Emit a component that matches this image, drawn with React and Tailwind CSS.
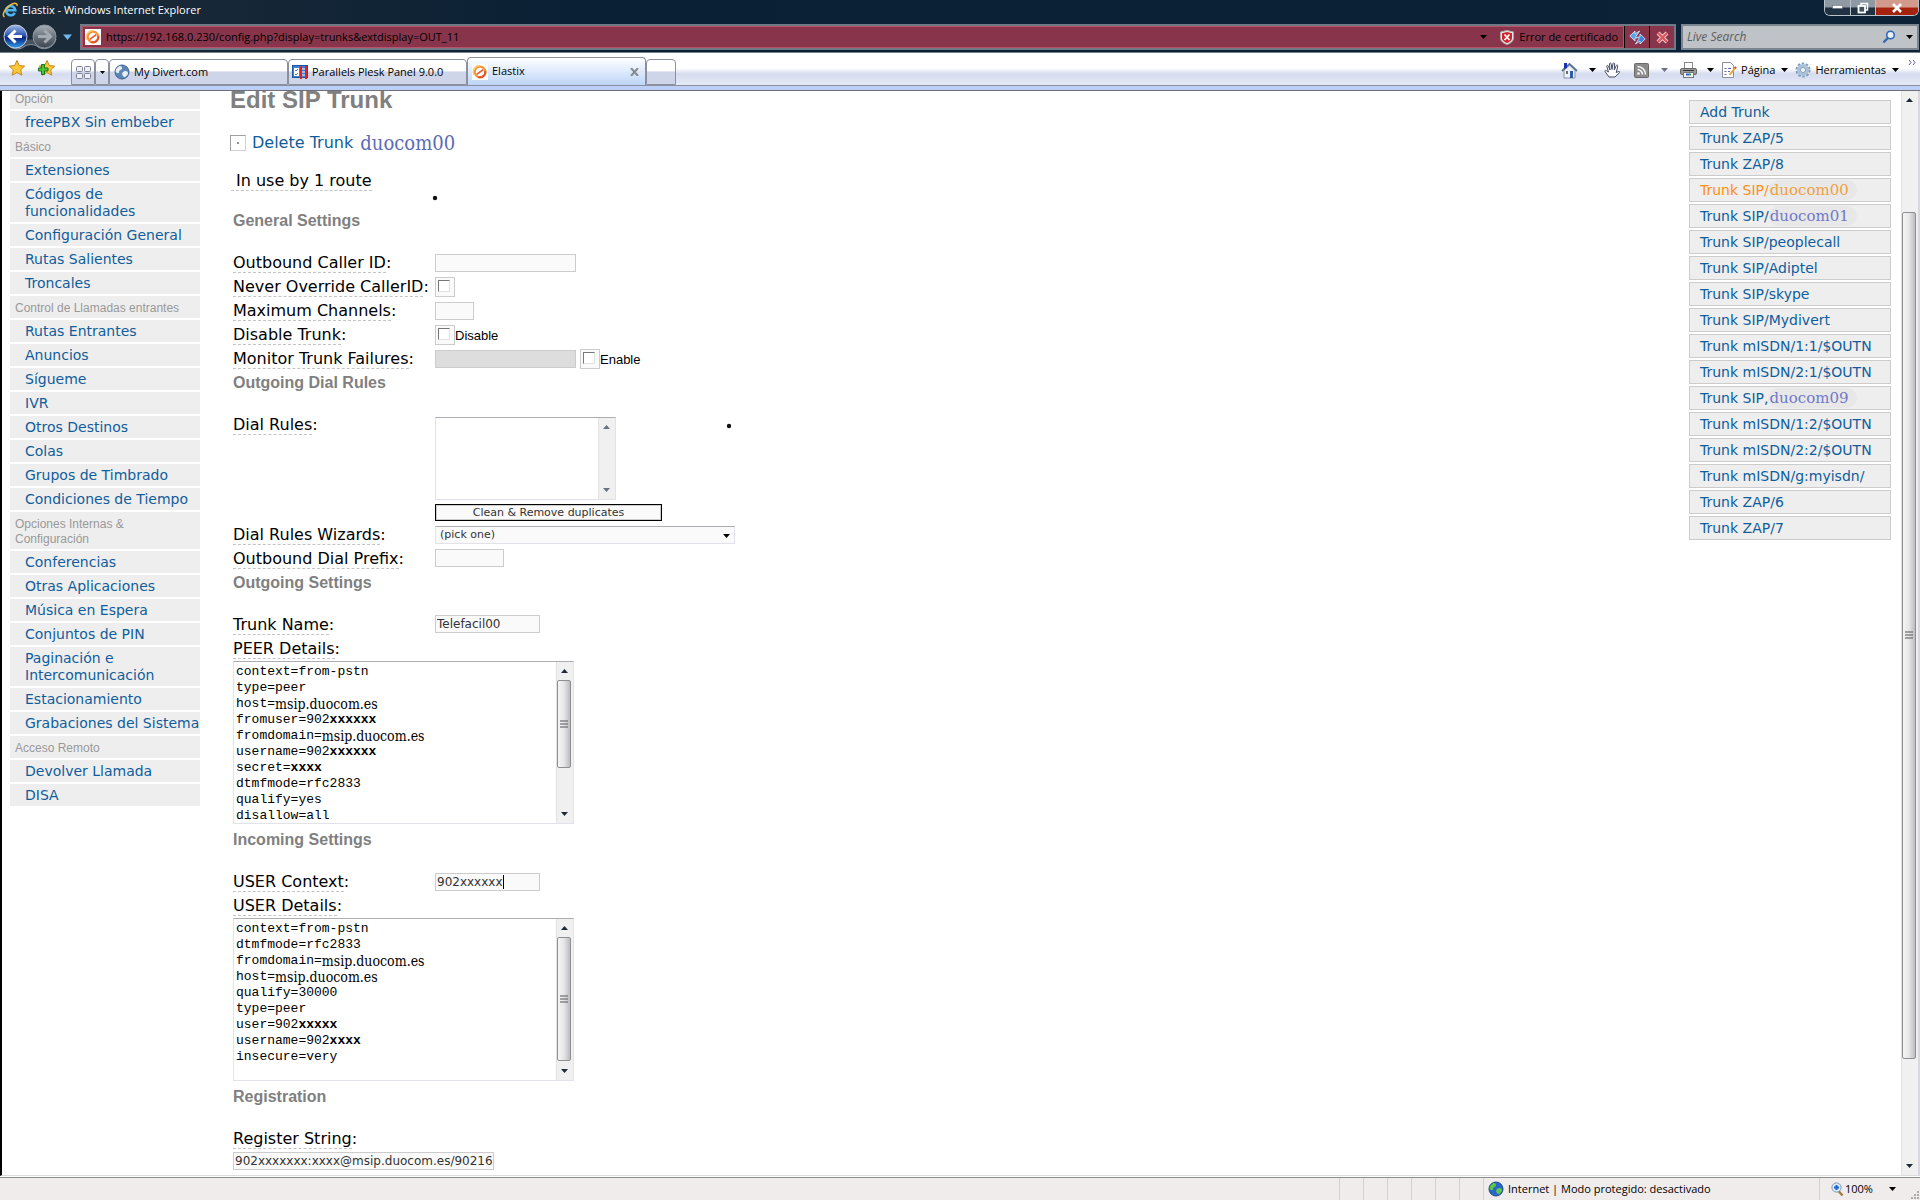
import React, { useState } from "react";

// Left menu: a title opens a group, the items below it are links
const menu = [
  { title: "Opción", items: ["freePBX Sin embeber"] },
  {
    title: "Básico",
    items: [
      "Extensiones",
      "Códigos de funcionalidades",
      "Configuración General",
      "Rutas Salientes",
      "Troncales",
    ],
  },
  {
    title: "Control de Llamadas entrantes",
    items: [
      "Rutas Entrantes",
      "Anuncios",
      "Sígueme",
      "IVR",
      "Otros Destinos",
      "Colas",
      "Grupos de Timbrado",
      "Condiciones de Tiempo",
    ],
  },
  {
    title: "Opciones Internas & Configuración",
    items: [
      "Conferencias",
      "Otras Aplicaciones",
      "Música en Espera",
      "Conjuntos de PIN",
      "Paginación e Intercomunicación",
      "Estacionamiento",
      "Grabaciones del Sistema",
    ],
  },
  { title: "Acceso Remoto", items: ["Devolver Llamada", "DISA"] },
];

const trunks = [
  { label: "Add Trunk" },
  { label: "Trunk ZAP/5" },
  { label: "Trunk ZAP/8" },
  { label: "Trunk SIP/", alias: "duocom00", current: true },
  { label: "Trunk SIP/", alias: "duocom01" },
  { label: "Trunk SIP/peoplecall" },
  { label: "Trunk SIP/Adiptel" },
  { label: "Trunk SIP/skype" },
  { label: "Trunk SIP/Mydivert" },
  { label: "Trunk mISDN/1:1/$OUTN" },
  { label: "Trunk mISDN/2:1/$OUTN" },
  { label: "Trunk SIP,", alias: "duocom09" },
  { label: "Trunk mISDN/1:2/$OUTN" },
  { label: "Trunk mISDN/2:2/$OUTN" },
  { label: "Trunk mISDN/g:myisdn/" },
  { label: "Trunk ZAP/6" },
  { label: "Trunk ZAP/7" },
];

// [plain text, replaced value, kind of value]
const peerLines = [
  ["context=from-pstn"],
  ["type=peer"],
  ["host=", "msip.duocom.es", "host"],
  ["fromuser=902", "xxxxxx", "mask"],
  ["fromdomain=", "msip.duocom.es", "host"],
  ["username=902", "xxxxxx", "mask"],
  ["secret=", "xxxx", "mask"],
  ["dtmfmode=rfc2833"],
  ["qualify=yes"],
  ["disallow=all"],
];

const userLines = [
  ["context=from-pstn"],
  ["dtmfmode=rfc2833"],
  ["fromdomain=", "msip.duocom.es", "host"],
  ["host=", "msip.duocom.es", "host"],
  ["qualify=30000"],
  ["type=peer"],
  ["user=902", "xxxxx", "mask"],
  ["username=902", "xxxx", "mask"],
  ["insecure=very"],
];

const boxClass =
  "border border-[#cccccc] bg-[#fafafa] px-px text-xs text-[#333333] outline-none";

// ------------------ Small drawings ------------------

const Down = ({ className = "text-black" }) => (
  <svg width="7" height="4" viewBox="0 0 7 4" className={`shrink-0 ${className}`}>
    <path d="M0 0h7L3.5 4z" fill="currentColor" />
  </svg>
);

const Up = ({ className = "text-black" }) => (
  <svg width="7" height="4" viewBox="0 0 7 4" className={`shrink-0 ${className}`}>
    <path d="M0 4h7L3.5 0z" fill="currentColor" />
  </svg>
);

const IeLogo = () => (
  <svg width="17" height="17" viewBox="0 0 17 17">
    <path
      d="M12.8 10.8A4.6 4.6 0 1 1 13.3 8.2H5"
      fill="none"
      stroke="#4fb4f2"
      strokeWidth="2.6"
    />
    <path
      d="M2.6 14.8C-.5 14 2.4 6.8 8 3.2c4.4-2.8 7.7-2.3 7 .8"
      fill="none"
      stroke="#f3bb35"
      strokeWidth="1.5"
    />
  </svg>
);

const ElastixLogo = () => (
  <svg width="16" height="16" viewBox="0 0 16 16" className="shrink-0">
    <rect width="16" height="16" fill="#fff" />
    <circle cx="8" cy="8" r="5.3" fill="none" stroke="#f3923a" strokeWidth="2.2" />
    <path d="M2 11A6.500 6.500 0 0 1 8 1.500" fill="none" stroke="#fbcf7a" strokeWidth="1.500" />
    <path d="M4.800 10.400l6.400-4.800" stroke="#ea5a30" strokeWidth="1.800" />
    <path d="M13.300 7a5.300 5.300 0 0 1-7 6" fill="none" stroke="#e8502c" strokeWidth="2" />
  </svg>
);

const NavButtons = () => (
  <svg width="56" height="26" viewBox="0 0 56 26" className="shrink-0">
    <defs>
      <linearGradient id="back" x1="0" y1="0" x2="0" y2="1">
        <stop offset="0" stopColor="#9db7e6" />
        <stop offset="0.45" stopColor="#2d57b4" />
        <stop offset="0.55" stopColor="#0a2280" />
        <stop offset="1" stopColor="#2fa0f0" />
      </linearGradient>
      <linearGradient id="forward" x1="0" y1="0" x2="0" y2="1">
        <stop offset="0" stopColor="#a9b0b8" />
        <stop offset="0.5" stopColor="#6a737d" />
        <stop offset="1" stopColor="#3c4650" />
      </linearGradient>
    </defs>
    <path d="M3 16c3 10 15 11 20 6 4-2 10-2 13 1 6 4 16 1 18-8" fill="#46525e" stroke="#8b949e" />
    <circle cx="13.5" cy="12.5" r="11.5" fill="url(#back)" stroke="#c6d2e4" />
    <circle cx="42.5" cy="12.5" r="11.5" fill="url(#forward)" stroke="#8d969f" />
    <path d="M20 12.5H8M13.5 6.5l-6 6 6 6" fill="none" stroke="#fff" strokeWidth="3" />
    <path d="M36 12.5h12M42.5 6.5l6 6-6 6" fill="none" stroke="#a4abb2" strokeWidth="3" />
  </svg>
);

const Star = ({ plus }) => (
  <svg width="18" height="18" viewBox="0 0 18 18">
    <path
      d="M9 1.5l2.3 5 5.4.6-4 3.7 1.1 5.4L9 13.5l-4.8 2.700 1.100-5.400-4-3.700 5.400-.6z"
      fill="#fcc838"
      stroke="#c98516"
    />
    {plus && (
      <path
        d="M3.500 5.500h3v3.500h3.500v3H6.500v3.500h-3V12H.5V9h3z"
        fill="#4fc23c"
        stroke="#197519"
      />
    )}
  </svg>
);

const Globe = ({ green }) => (
  <svg width="16" height="16" viewBox="0 0 16 16" className="shrink-0">
    <circle cx="8" cy="8" r="7" fill={green ? "#2a66c8" : "#5d86b5"} />
    <path
      d="M3 3c3-2 5-1 5 1S5 6 5 8s-2 1-3.500 0S2 4 3 3zM9 8c2-2 5-1 5 1s-3 5-4 4-3-3-1-5z"
      fill={green ? "#5cc94a" : "#e6eef6"}
    />
    <circle cx="8" cy="8" r="7" fill="none" stroke={green ? "#1b4a86" : "#3f638f"} />
  </svg>
);

const PleskIcon = () => (
  <svg width="16" height="14" viewBox="0 0 16 14" className="shrink-0">
    <rect x="0.5" y="0.5" width="15" height="12" fill="#3d7fd0" stroke="#1c57a6" />
    <rect x="2" y="3" width="5" height="8" fill="#fff" />
    <path d="M3 5l1 1 2-2M3 9l1 1 2-2" stroke="#3d7fd0" fill="none" />
    <path d="M9 1v13M14 1v13" stroke="#e02020" strokeWidth="2" />
    <path d="M10 4h3M10 7h3M10 10h3" stroke="#fff" />
  </svg>
);

const Shield = () => (
  <svg width="14" height="15" viewBox="0 0 14 15" className="shrink-0">
    <path d="M7 .5l6.5 1.5v6c0 3-3 5.5-6.5 6.5C3.5 13.5.5 11 .5 8V2z" fill="#e9e9e9" stroke="#aaa" />
    <path d="M7 2l5 1.2V8c0 2.4-2.500 4.200-5 5-2.500-.8-5-2.600-5-5V3.200z" fill="#d0222c" />
    <path d="M4.5 4.5l5 5.500M9.500 4.500l-5 5.500" stroke="#fff" strokeWidth="1.800" />
  </svg>
);

const Refresh = () => (
  <svg width="17" height="15" viewBox="0 0 17 15" className="shrink-0">
    <path
      d="M6 1L.8 6 6 11V8h2.500L7 6.500 10.500 1 6 4z"
      fill="#5aa4ee"
      stroke="#e4f0ff"
      strokeWidth="0.8"
    />
    <path
      d="M11 4l5.200 5-5.200 5v-3L6.500 14 10 8.500 8.500 7H11z"
      fill="#3d83dc"
      stroke="#e4f0ff"
      strokeWidth="0.8"
    />
  </svg>
);

const Stop = () => (
  <svg width="13" height="13" viewBox="0 0 13 13" className="shrink-0">
    <path d="M2 2l9 9M11 2l-9 9" stroke="#f3d3d5" strokeWidth="4" />
    <path d="M2 2l9 9M11 2l-9 9" stroke="#e0545c" strokeWidth="2.4" />
  </svg>
);

const Magnifier = () => (
  <svg width="14" height="14" viewBox="0 0 14 14">
    <circle cx="8.5" cy="5" r="3.8" fill="#e8f1fa" stroke="#2f67b4" strokeWidth="1.6" />
    <path d="M5.8 8L1.5 12.5" stroke="#2f67b4" strokeWidth="2.4" />
  </svg>
);

const HomeIcon = () => (
  <svg width="17" height="17" viewBox="0 0 17 17">
    <path d="M3 8v8h11V8L8.5 3z" fill="#eef1f5" stroke="#8a93a0" />
    <path d="M1 9l7.500-7L16 9" fill="none" stroke="#5b7398" strokeWidth="1.8" />
    <path d="M3 1h3v5L3 7z" fill="#1832b8" />
    <path d="M9 9h3v7H9z" fill="#2c5ea8" />
    <path d="M5 9h2v3H5z" fill="#6d6d6d" />
  </svg>
);

const Hand = () => (
  <svg width="17" height="16" viewBox="0 0 17 16">
    <path
      d="M5 15L1 9.500c-.5-1 .8-1.500 1.500-.8L4.500 10 2.800 4.500c-.2-1.200 1.200-1.400 1.600-.4L6 8 5.500 2c0-1.200 1.500-1.200 1.700 0L8 7.500 9 1.500c.2-1 1.700-.8 1.600.3L10.300 8l2-4.500c.5-1 1.800-.4 1.500.6l-1.500 6.400 2.500-1c1-.2 1.300.8.5 1.300L11 15z"
      fill="#fff"
      stroke="#474c68"
    />
  </svg>
);

const Feed = () => (
  <svg width="15" height="15" viewBox="0 0 15 15">
    <rect x="0.5" y="0.5" width="14" height="14" rx="1" fill="#8b8b8b" stroke="#6a6a6a" />
    <circle cx="4.5" cy="10.5" r="1.3" fill="#fff" />
    <path d="M3.5 6.5a5 5 0 0 1 5 5M3.5 3.5a8 8 0 0 1 8 8" fill="none" stroke="#fff" strokeWidth="1.5" />
  </svg>
);

const Printer = () => (
  <svg width="17" height="16" viewBox="0 0 17 16">
    <rect x="4.5" y="0.5" width="8" height="6" fill="#fff" stroke="#888" />
    <rect x="0.5" y="6.5" width="16" height="6" rx="1.5" fill="#9a9a9a" stroke="#666" />
    <path d="M3 8.5h11" stroke="#333" />
    <rect x="3.5" y="10.5" width="10" height="5" fill="#f4f4f4" stroke="#777" />
    <path d="M6 12.5h3" stroke="#2a66c8" strokeWidth="2" />
    <path d="M9 12.5h2" stroke="#3f9f4a" strokeWidth="2" />
  </svg>
);

const PageIcon = () => (
  <svg width="16" height="16" viewBox="0 0 16 16">
    <path d="M1.5.5h8l3 3v12h-11z" fill="#fff" stroke="#8a8fa0" />
    <path d="M3.5 6.5h2M7 6.5h3M3.5 9.5h2M7 9.5h2M3.5 12.5h2" stroke="#6a62b8" />
    <path d="M14.5 5.5L8.5 13" stroke="#e8a33a" strokeWidth="2" />
    <path d="M15 5l-1 1.2" stroke="#c43c3c" strokeWidth="2" />
  </svg>
);

const Gear = () => (
  <svg width="16" height="16" viewBox="0 0 16 16">
    <circle cx="8" cy="8" r="6.5" fill="none" stroke="#7f9bb8" strokeWidth="2" strokeDasharray="2.5 1.58" />
    <circle cx="8" cy="8" r="4.3" fill="none" stroke="#a9c2da" strokeWidth="3.2" />
    <circle cx="8" cy="8" r="2.5" fill="#f4f8fc" stroke="#7f9bb8" />
  </svg>
);

const QuickTabs = () => (
  <svg width="15" height="13" viewBox="0 0 15 13">
    <g fill="#eef0f6" stroke="#7b8094">
      <rect x="0.5" y="0.5" width="6" height="5" rx="1" />
      <rect x="8.5" y="0.5" width="6" height="5" rx="1" />
      <rect x="0.5" y="7.5" width="6" height="5" rx="1" />
      <rect x="8.5" y="7.5" width="6" height="5" rx="1" />
    </g>
  </svg>
);

const Dot = () => (
  <svg width="6" height="6" viewBox="0 0 6 6">
    <circle cx="3" cy="3" r="2.2" fill="#111" />
  </svg>
);

// ------------------ Form parts ------------------

const Scrollbar = ({ size, idle, page }) => (
  <div
    className={`flex w-[17px] shrink-0 flex-col items-center border-l border-[#e2e2e2] bg-[#f0f0f0] pr-[2px] ${
      idle ? "text-gray-500" : "text-gray-800"
    }`}
  >
    <div className={`flex shrink-0 items-center justify-center ${page ? "h-[18px]" : "h-[18px]"}`}>
      <Up className="" />
    </div>
    {page && <div className="min-h-0 flex-[103]" />}
    {size && (
      <div
        className={`flex w-full items-center justify-center rounded-xs border border-[#8e8f8f] bg-linear-to-r from-[#f5f5f5] via-[#e6e6e8] to-[#bcbcc0] ${size}`}
      >
        <svg width="8" height="8" viewBox="0 0 8 8">
          <path d="M0 1h8M0 4h8M0 7h8" stroke="#55555a" />
        </svg>
      </div>
    )}
    <div className={page ? "min-h-0 flex-[98]" : "flex-1"} />
    <div className="flex h-[18px] shrink-0 items-center justify-center">
      <Down className="" />
    </div>
  </div>
);

const Label = ({ htmlFor, children }) => (
  <label htmlFor={htmlFor} className="block text-base leading-6 whitespace-nowrap">
    <span className="border-b border-dashed border-[#c4c4c4]">{children}</span>:
  </label>
);

const Heading = ({ children }) => (
  <h5 className="mb-[19px] font-['Liberation_Sans',Arial,sans-serif] text-base leading-[23px] font-bold text-[#808080]">
    {children}
  </h5>
);

const Row = ({ id, label, children }) => (
  <div className="flex min-h-6 items-start">
    <div className="w-[202px] shrink-0">
      <Label htmlFor={id}>{label}</Label>
    </div>
    {children}
  </div>
);

const Check = ({ id, text }) => (
  <div className="flex h-6 items-center">
    <span className="flex size-5 border border-[#cccccc] bg-[#fafafa] p-[2px]">
      <input
        id={id}
        type="checkbox"
        className="size-3 appearance-none border border-t-[#777777] border-r-[#e3e3e3] border-b-[#e3e3e3] border-l-[#777777] bg-white checked:bg-[#777777]"
      />
    </span>
    {text && (
      <label
        htmlFor={id}
        className="pt-[2px] font-['Liberation_Sans',Arial,sans-serif] text-[13px] leading-5"
      >
        {text}
      </label>
    )}
  </div>
);

const DetailsBox = ({ id, lines, thumb }) => (
  <div className="mb-1 flex h-[163px] w-[341px] border border-[#e2e3ea] border-t-[#abadb3] bg-white">
    <div className="relative min-w-0 flex-1 font-['Liberation_Mono','Courier_New',monospace] text-[13px] leading-4">
      <textarea
        id={id}
        spellCheck={false}
        defaultValue={lines.map((line) => line[0]).join("\n")}
        className="block size-full resize-none overflow-hidden px-[2px] pt-[2px] outline-none"
      />
      <div className="pointer-events-none absolute inset-x-[2px] top-[2px]">
        {lines.map(([text, value, kind], i) => (
          <div key={i} className="h-4" style={{ paddingLeft: `${text.length}ch` }}>
            {kind === "mask" && <b className="block h-4">{value}</b>}
            {kind === "host" && (
              <span className="block h-4 font-['DejaVu_Serif_Condensed','DejaVu_Serif',serif] text-sm leading-4">
                {value}
              </span>
            )}
          </div>
        ))}
      </div>
    </div>
    <Scrollbar size={thumb} />
  </div>
);

// ------------------ Browser frame ------------------

const TitleBar = () => (
  <div className="flex h-[22px] items-start justify-between pl-[2px]">
    <div className="flex items-center gap-[3px] pt-px">
      <IeLogo />
      <span className="text-[11px] leading-[18px] text-white">Elastix - Windows Internet Explorer</span>
    </div>
    <div className="mr-px flex h-4 overflow-hidden rounded-b-md border border-t-0 border-[#b9c2cb] text-white">
      <button
        aria-label="Minimizar"
        className="flex w-[26px] items-center justify-center border-r border-[#b9c2cb] bg-linear-to-b from-[#8e99a4] from-45% to-[#1f3142] to-55%"
      >
        <svg width="11" height="5" viewBox="0 0 11 5">
          <rect x="0.5" y="0.5" width="10" height="3" fill="#fff" stroke="#56616c" strokeWidth="0.5" />
        </svg>
      </button>
      <button
        aria-label="Restaurar"
        className="flex w-[25px] items-center justify-center border-r border-[#b9c2cb] bg-linear-to-b from-[#8e99a4] from-45% to-[#1f3142] to-55%"
      >
        <svg width="12" height="12" viewBox="0 0 12 12">
          <path d="M4 1.5h6.5V8H4z" fill="none" stroke="#fff" strokeWidth="1.5" />
          <rect x="1.5" y="4" width="6.5" height="6.5" fill="#45525f" stroke="#fff" strokeWidth="1.8" />
        </svg>
      </button>
      <button
        aria-label="Cerrar"
        className="flex w-[42px] items-center justify-center bg-linear-to-b from-[#d29a8c] from-45% to-[#a5220c] to-55%"
      >
        <svg width="12" height="10" viewBox="0 0 12 10">
          <path d="M2 1l8 8M10 1L2 9" stroke="#fff" strokeWidth="2.6" />
        </svg>
      </button>
    </div>
  </div>
);

const AddressRow = () => (
  <div className="flex h-[30px] items-center gap-[5px] pr-px pl-[2px]">
    <div className="flex w-[73px] shrink-0 items-center">
      <NavButtons />
      <button aria-label="Páginas recientes" className="ml-[5px]">
        <svg width="9" height="6" viewBox="0 0 9 6">
          <path d="M0 .5h9L4.5 6z" fill="#6fb6ee" />
        </svg>
      </button>
    </div>
    <div className="flex h-[26px] min-w-0 flex-1 items-stretch border-2 border-[#6f7a86] bg-[#88354b] text-black">
      <div className="flex min-w-0 flex-1 items-center gap-[5px] border border-[#b9506a] pl-[2px]">
        <ElastixLogo />
        <input
          aria-label="Dirección"
          defaultValue="https://192.168.0.230/config.php?display=trunks&extdisplay=OUT_11"
          className="min-w-0 flex-1 bg-transparent text-[11px] outline-none"
        />
        <Down className="mr-2" />
        <Shield />
        <span className="pr-[5px] text-[11px]">Error de certificado</span>
      </div>
      <button aria-label="Actualizar" className="flex w-[25px] items-center justify-center border-l border-black">
        <Refresh />
      </button>
      <button aria-label="Detener" className="flex w-[25px] items-center justify-center border-l border-black">
        <Stop />
      </button>
    </div>
    <div className="flex h-[26px] w-[238px] shrink-0 items-center border-2 border-[#7b858f] bg-[#bfc2c6] pl-1">
      <input
        aria-label="Live Search"
        placeholder="Live Search"
        className="min-w-0 flex-1 bg-transparent text-xs italic outline-none placeholder:text-[#5c5f63]"
      />
      <button aria-label="Buscar">
        <Magnifier />
      </button>
      <Down className="mr-1 ml-[10px]" />
    </div>
  </div>
);

const tabClass =
  "flex items-center rounded-t border border-[#8b90a0] bg-linear-to-b from-white from-45% to-[#cfd5e8] to-50%";

const TabBar = () => (
  <div className="border-t border-[#76818c] bg-linear-to-b from-white from-40% via-[#d5dcef] via-55% to-[#eef1fa]">
    <div className="flex h-[33px] items-end justify-between border-b border-[#8b90a0] pr-1 pl-2 text-[11px]">
      <div className="flex items-end">
        <div className="flex h-[26px] w-[63px] items-start gap-3">
          <button aria-label="Favoritos">
            <Star />
          </button>
          <button aria-label="Agregar a favoritos">
            <Star plus />
          </button>
        </div>
        <button aria-label="Pestañas rápidas" className={`${tabClass} h-[26px] w-6 justify-center`}>
          <QuickTabs />
        </button>
        <button aria-label="Lista de pestañas" className={`${tabClass} h-[26px] w-[14px] justify-center`}>
          <svg width="5" height="3" viewBox="0 0 5 3">
            <path d="M0 0h5L2.5 3z" />
          </svg>
        </button>
        <button className={`${tabClass} h-[26px] w-[179px] gap-1 pl-1`}>
          <Globe />
          My Divert.com
        </button>
        <button className={`${tabClass} h-[26px] w-[179px] gap-1 pl-[3px]`}>
          <PleskIcon />
          Parallels Plesk Panel 9.0.0
        </button>
        <button className="flex h-7 w-[179px] items-center gap-1 rounded-t border border-b-0 border-[#8b90a0] bg-linear-to-b from-white to-[#bdd5f8] pl-1">
          <ElastixLogo />
          <span className="flex-1 text-left">Elastix</span>
          <svg width="9" height="8" viewBox="0 0 9 8" className="mr-[6px]">
            <path d="M1 0l7 8M8 0L1 8" stroke="#85898f" strokeWidth="2" />
          </svg>
        </button>
        <button aria-label="Nueva pestaña" className={`${tabClass} h-[26px] w-[30px]`} />
      </div>
      <div className="flex h-[30px] items-center">
        <button aria-label="Inicio" className="flex items-center gap-[11px]">
          <HomeIcon />
          <Down />
        </button>
        <button aria-label="Panorámica" className="ml-2">
          <Hand />
        </button>
        <button aria-label="Fuentes" className="ml-[13px] flex items-center gap-3">
          <Feed />
          <Down className="text-gray-500" />
        </button>
        <button aria-label="Imprimir" className="ml-3 flex items-center gap-[10px]">
          <Printer />
          <Down />
        </button>
        <button className="ml-[7px] flex items-center gap-1">
          <PageIcon />
          Página
          <Down className="ml-[2px]" />
        </button>
        <button className="ml-[7px] flex items-center gap-1">
          <Gear />
          Herramientas
          <Down className="ml-[2px]" />
        </button>
        <button aria-label="Más" className="mb-4 ml-[9px]">
          <svg width="8" height="5" viewBox="0 0 8 5">
            <path d="M1 0l2 2.500L1 5M5 0l2 2.500L5 5" fill="none" stroke="#5b5f9c" />
          </svg>
        </button>
      </div>
    </div>
    <div className="h-[5px] border-b border-[#6f6f78] bg-[#bcd0f7]" />
  </div>
);

const StatusBar = () => (
  <div className="flex h-[23px] shrink-0 items-stretch justify-end border-t border-[#8e8e92] bg-[#f0ecec] text-[11px]">
    {[1, 2, 3, 4, 5, 6].map((n) => (
      <div key={n} className="w-6 border-l border-[#d4d0d0]" />
    ))}
    <div className="flex w-[336px] items-center gap-1 border-l border-[#d4d0d0] pl-1">
      <Globe green />
      Internet | Modo protegido: desactivado
    </div>
    <div className="flex w-[101px] items-center border-l border-[#d4d0d0] pl-[11px]">
      <svg width="13" height="15" viewBox="0 0 13 15">
        <path d="M7.5 9l4 4.5" stroke="#a5793f" strokeWidth="2.4" />
        <circle cx="5.5" cy="5.5" r="4.6" fill="#d9ecfb" stroke="#7f97ae" />
        <path d="M5.5 3v5M3 5.5h5" stroke="#1c62c8" strokeWidth="2" />
      </svg>
      <button className="ml-px flex items-center gap-4">
        100%
        <Down />
      </button>
      <svg width="9" height="9" viewBox="0 0 9 9" className="mr-px ml-auto self-end">
        <path d="M7 1h2M4 4h2M7 4h2M1 7h2M4 7h2M7 7h2" stroke="#b0aaaa" strokeWidth="2" />
      </svg>
    </div>
  </div>
);

// ------------------ Page ------------------

const Sidebar = () => (
  <nav className="ml-2 w-[190px] shrink-0">
    {menu.map((group, g) => (
      <div key={group.title}>
        <div
          className={`mb-[2px] bg-[#eeeeee] pl-[5px] font-['Liberation_Sans',Arial,sans-serif] text-xs leading-[15px] text-[#999999] ${
            g === 0 ? "pt-px pb-[2px]" : "pt-[5px] pb-[2px]"
          }`}
        >
          {group.title}
        </div>
        {group.items.map((item) => (
          <a
            key={item}
            href="#"
            className="mb-[2px] block bg-[#eeeeee] pt-[3px] pb-[2px] pl-[15px] text-sm leading-[17px] text-[#105d9c]"
          >
            {item}
          </a>
        ))}
      </div>
    ))}
  </nav>
);

const TrunkList = () => (
  <ul className="mt-[9px] mr-[10px] flex w-[202px] shrink-0 flex-col gap-[2px]">
    {trunks.map((trunk, i) => (
      <li key={i}>
        <a
          href="#"
          className={`flex h-6 items-center border border-[#cccccc] bg-[#eeeeee] pl-[10px] text-sm whitespace-nowrap ${
            trunk.current ? "text-[#ff9010]" : "text-[#105d9c]"
          }`}
        >
          {trunk.label}
          {trunk.alias && (
            <span
              className={`rounded-full bg-[#e8e8e8] pr-2 pl-px font-['DejaVu_Serif',serif] text-[15px] leading-5 font-extralight ${
                trunk.current ? "text-[#f0a040]" : "text-[#7078c8]"
              }`}
            >
              {trunk.alias}
            </span>
          )}
        </a>
      </li>
    ))}
  </ul>
);

const TrunkForm = () => {
  const [wizard, setWizard] = useState("(pick one)");

  return (
    <main className="relative min-w-0 flex-1 pl-[30px]">
      <h2 className="font-['Liberation_Sans',Arial,sans-serif] text-2xl leading-[18px] font-bold text-[#808080]">
        Edit SIP Trunk
      </h2>
      <a href="#" className="mt-[22px] flex h-6 items-center text-base whitespace-pre text-[#105d9c]">
        <span className="mr-[6px] flex size-4 items-center justify-center border border-[#d0d0d0] border-t-[#a0a0a0] border-l-[#a0a0a0]">
          <span className="size-[2px] bg-[#909090]" />
        </span>
        {"Delete Trunk "}
        <span className="ml-[2px] font-['DejaVu_Serif_Condensed','DejaVu_Serif',serif] text-xl leading-6 text-[#5b6bb8]">
          duocom00
        </span>
      </a>
      <p className="mt-[14px] text-base leading-6">
        <span className="ml-px border-b border-dashed border-[#c4c4c4] pl-[5px]">In use by 1 route</span>
      </p>
      <div className="absolute top-[104px] left-[232px]">
        <Dot />
      </div>
      <div className="absolute top-[332px] left-[526px]">
        <Dot />
      </div>

      <form className="mt-4 pl-[3px]" onSubmit={(e) => e.preventDefault()}>
        <Heading>General Settings</Heading>
        <Row id="outcid" label="Outbound Caller ID">
          <input id="outcid" className={`${boxClass} mt-[3px] h-[18px] w-[141px]`} />
        </Row>
        <Row id="keepcid" label="Never Override CallerID">
          <Check id="keepcid" />
        </Row>
        <Row id="maxchans" label="Maximum Channels">
          <input id="maxchans" className={`${boxClass} mt-[3px] h-[18px] w-[39px]`} />
        </Row>
        <Row id="disable" label="Disable Trunk">
          <Check id="disable" text="Disable" />
        </Row>
        <Row id="failtrunk" label="Monitor Trunk Failures">
          <input
            id="failtrunk"
            disabled
            className="mt-[3px] mr-1 h-[18px] w-[141px] border border-[#cccccc] bg-[#dddddd]"
          />
          <Check id="failenable" text="Enable" />
        </Row>

        <Heading>Outgoing Dial Rules</Heading>
        <Row id="dialrules" label="Dial Rules">
          <div className="mb-[2px] pt-1">
            <div className="flex h-[83px] w-[181px] border border-[#e2e3ea] border-t-[#abadb3]">
              <textarea id="dialrules" className="min-w-0 flex-1 resize-none overflow-hidden outline-none" />
              <Scrollbar idle />
            </div>
            <button
              type="button"
              className="mt-1 block h-[17px] w-[227px] border border-black bg-[#fafafa] text-center text-[11px] leading-[15px] text-[#333333] inset-ring inset-ring-[#cccccc]"
            >
              Clean &amp; Remove duplicates
            </button>
          </div>
        </Row>
        <Row id="wizard" label="Dial Rules Wizards">
          <div className="relative mt-[3px]">
            <select
              id="wizard"
              value={wizard}
              onChange={(e) => setWizard(e.target.value)}
              className="block h-[18px] w-[300px] appearance-none border border-[#e2e3ea] border-t-[#abadb3] bg-[#fafafa] pl-1 text-[11px] leading-4 text-[#333333]"
            >
              <option>(pick one)</option>
            </select>
            <Down className="pointer-events-none absolute top-2 right-[5px] text-black" />
          </div>
        </Row>
        <Row id="prefix" label="Outbound Dial Prefix">
          <input id="prefix" className={`${boxClass} mt-[2px] h-[18px] w-[69px]`} />
        </Row>

        <Heading>Outgoing Settings</Heading>
        <Row id="trunkname" label="Trunk Name">
          <input
            id="trunkname"
            defaultValue="Telefacil00"
            className={`${boxClass} mt-[2px] h-[18px] w-[105px]`}
          />
        </Row>
        <Label htmlFor="peer">PEER Details</Label>
        <DetailsBox id="peer" lines={peerLines} thumb="h-[88px] shrink-0" />

        <Heading>Incoming Settings</Heading>
        <Row id="usercontext" label="USER Context">
          <div className="relative mt-[3px]">
            <input
              id="usercontext"
              defaultValue="902xxxxxx"
              className={`${boxClass} block h-[18px] w-[105px]`}
            />
            <span className="absolute top-[2px] left-[68px] h-[14px] w-px bg-black" />
          </div>
        </Row>
        <Label htmlFor="userdetails">USER Details</Label>
        <DetailsBox id="userdetails" lines={userLines} thumb="h-[124px] shrink-0" />

        <Heading>Registration</Heading>
        <Label htmlFor="register">Register String</Label>
        <input
          id="register"
          defaultValue="902xxxxxxx:xxxx@msip.duocom.es/90216"
          className={`${boxClass} mt-px block h-[18px] w-[261px]`}
        />
      </form>
    </main>
  );
};

const App = () => {
  return (
    <div className="flex h-screen flex-col overflow-hidden bg-white text-black">
      <div className="shrink-0 bg-linear-to-r from-[#1d2b38] via-[#0a2034] via-30% to-[#0c2236] font-['Open_Sans','Noto_Sans',sans-serif]">
        <TitleBar />
        <AddressRow />
        <TabBar />
      </div>
      <div className="mb-px flex min-h-0 flex-1 overflow-hidden border-r-2 border-b border-l-2 border-r-[#d8d8de] border-b-[#dddddd] border-l-black font-['DejaVu_Sans',Verdana,sans-serif]">
        <Sidebar />
        <TrunkForm />
        <TrunkList />
        <Scrollbar page size="min-h-0 flex-[847]" />
      </div>
      <div className="shrink-0 font-['Open_Sans','Noto_Sans',sans-serif]">
        <StatusBar />
      </div>
    </div>
  );
};

export default App;
